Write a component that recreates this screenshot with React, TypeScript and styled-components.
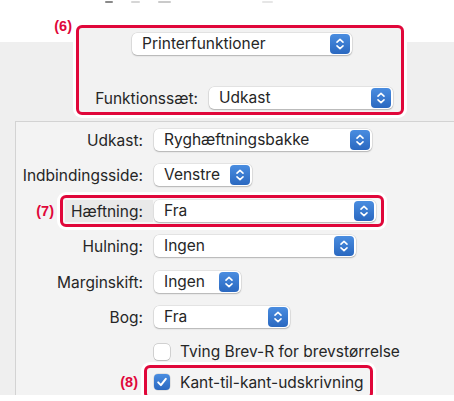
import React from "react";
import styled, { createGlobalStyle } from "styled-components";

const RED = "#e0073a";
const TEXT = "#262626";
const BLUE = "linear-gradient(to bottom, #4a8de0, #2a68c0)";

const GlobalStyle = createGlobalStyle`
  html, body {
    margin: 0;
    padding: 0;
    background: #fff;
  }

  body {
    font-family: Inter, "Liberation Sans", sans-serif;
    font-size: 15.5px;
    color: ${TEXT};
    -webkit-font-smoothing: antialiased;
  }
`;

const Window = styled.div`
  width: 454px;
  height: 395px;
  display: flex;
  flex-direction: column;
  background: linear-gradient(to bottom, #fff 0 42px, #efefef 42px);
`;

const Marks = styled.div`
  display: flex;
  height: 2px;
  margin-top: 1px;
`;

const Mark = styled.span<{ $ml: number; $w: number; $c: string }>`
  margin-left: ${(p) => p.$ml}px;
  width: ${(p) => p.$w}px;
  height: 2px;
  border-radius: 1px;
  background: ${(p) => p.$c};
  filter: blur(0.4px);
`;

const TopGroup = styled.div`
  display: flex;
  align-items: flex-start;
  margin-top: 15px;
`;

const Tag = styled.span<{ $width: number }>`
  width: ${(p) => p.$width}px;
  flex-shrink: 0;
  text-align: right;
  font-family: "Liberation Sans", Arial, sans-serif;
  font-weight: 700;
  font-size: 14.5px;
  line-height: 16px;
  color: ${RED};
`;

const Annot = styled.div<{ $bg: string }>`
  box-sizing: border-box;
  border: 3px solid ${RED};
  border-radius: 6px;
  box-shadow: 0 0 0 3px #fff;
  background: ${(p) => p.$bg};
`;

const FeatureBox = styled(Annot)`
  width: 328px;
  height: 90px;
  margin: 7px 0 0 4px;
  display: flex;
  flex-direction: column;
`;

const StapleBox = styled(Annot)`
  height: 32px;
  display: flex;
  align-items: stretch;
  padding: 2px 5px 2px 2px;
  margin-left: 6px;
`;

const EdgeBox = styled(Annot)`
  height: 34px;
  display: flex;
  align-items: center;
  padding: 0 6px 0 7px;
  margin-left: 6px;
`;

const PopupBox = styled.div<{ $w: number; $mt?: number; $ml?: number }>`
  width: ${(p) => p.$w}px;
  height: 22px;
  flex-shrink: 0;
  box-sizing: border-box;
  margin-top: ${(p) => p.$mt ?? 0}px;
  margin-left: ${(p) => p.$ml ?? 0}px;
  display: flex;
  align-items: center;
  justify-content: space-between;
  padding: 0 2px 0 10px;
  background: #fff;
  border-radius: 5px;
  box-shadow: 0 0 0 0.5px rgba(0, 0, 0, 0.12), 0 1px 1.5px rgba(0, 0, 0, 0.22);
  line-height: 22px;
  white-space: nowrap;
`;

const Stepper = styled.span`
  width: 20px;
  height: 20px;
  border-radius: 4px;
  background: ${BLUE};
  display: flex;
  align-items: center;
  justify-content: center;
`;

const FeatureRow = styled.div`
  display: flex;
  align-items: center;
  margin: 32px 0 0 11px;
`;

const FeatureLabel = styled.span`
  width: 108px;
  margin-right: 11px;
  text-align: right;
  white-space: nowrap;
`;

const Panel = styled.div`
  flex: 1;
  margin: 6px 0 0 15px;
  padding-top: 7px;
  display: flex;
  flex-direction: column;
  background: #f3f3f3;
  border-left: 1px solid #d3d3d3;
  border-top: 1px solid #d3d3d3;
`;

const Row = styled.div<{ $top: number }>`
  display: flex;
  align-items: center;
  margin-top: ${(p) => p.$top}px;
`;

const Label = styled.span`
  width: 127px;
  margin-right: 11px;
  flex-shrink: 0;
  text-align: right;
  white-space: nowrap;
`;

const LabelCell = styled.span`
  width: 88px;
  box-sizing: border-box;
  padding-right: 10px;
  margin-right: 1px;
  display: flex;
  align-items: center;
  justify-content: flex-end;
  background: #e9e9e9;
  white-space: nowrap;
`;

const Check = styled.span<{ $on?: boolean }>`
  width: 16px;
  height: 16px;
  flex-shrink: 0;
  border-radius: 4px;
  display: flex;
  align-items: center;
  justify-content: center;
  background: ${(p) => (p.$on ? BLUE : "#fff")};
  box-shadow: ${(p) =>
    p.$on
      ? "0 0 0 0.5px rgba(0,0,0,0.15)"
      : "0 0 0 0.5px rgba(0,0,0,0.28), 0 1px 1px rgba(0,0,0,0.1)"};
`;

const CheckText = styled.span`
  margin-left: 10px;
  white-space: nowrap;
`;

const Arrows = () => (
  <svg width="20" height="20" viewBox="0 0 20 20" fill="none">
    <path
      d="M7 8.2 L10 5.4 L13 8.2 M7 11.8 L10 14.6 L13 11.8"
      stroke="#fff"
      strokeWidth="1.6"
      strokeLinecap="round"
      strokeLinejoin="round"
    />
  </svg>
);

const Tick = () => (
  <svg width="16" height="16" viewBox="0 0 16 16" fill="none">
    <path
      d="M4.2 8.4 L6.9 11.1 L11.8 4.9"
      stroke="#fff"
      strokeWidth="2"
      strokeLinecap="round"
      strokeLinejoin="round"
    />
  </svg>
);

const Popup = ({
  w,
  mt,
  ml,
  children,
}: {
  w: number;
  mt?: number;
  ml?: number;
  children: React.ReactNode;
}) => (
  <PopupBox $w={w} $mt={mt} $ml={ml}>
    <span>{children}</span>
    <Stepper>
      <Arrows />
    </Stepper>
  </PopupBox>
);

const App = () => (
  <>
    <GlobalStyle />
    <Window>
      <Marks>
        <Mark $ml={105} $w={8} $c="#8a8a8a" />
        <Mark $ml={18} $w={9} $c="#d6d6d6" />
        <Mark $ml={18} $w={13} $c="#cacaca" />
        <Mark $ml={91} $w={11} $c="#e6e6e6" />
      </Marks>

      <TopGroup>
        <Tag $width={72}>(6)</Tag>
        <FeatureBox $bg="#f2f2f2">
          <Popup w={220} mt={5} ml={53}>
            Printerfunktioner
          </Popup>
          <FeatureRow>
            <FeatureLabel>Funktionssæt:</FeatureLabel>
            <Popup w={184}>Udkast</Popup>
          </FeatureRow>
        </FeatureBox>
      </TopGroup>

      <Panel>
        <Row $top={0}>
          <Label>Udkast:</Label>
          <Popup w={218}>Ryghæftningsbakke</Popup>
        </Row>
        <Row $top={13}>
          <Label>Indbindingsside:</Label>
          <Popup w={98}>Venstre</Popup>
        </Row>
        <Row $top={9}>
          <Tag $width={38}>(7)</Tag>
          <StapleBox $bg="#f6f6f6">
            <LabelCell>Hæftning:</LabelCell>
            <Popup w={222}>Fra</Popup>
          </StapleBox>
        </Row>
        <Row $top={8}>
          <Label>Hulning:</Label>
          <Popup w={202}>Ingen</Popup>
        </Row>
        <Row $top={14}>
          <Label>Marginskift:</Label>
          <Popup w={87}>Ingen</Popup>
        </Row>
        <Row $top={13}>
          <Label>Bog:</Label>
          <Popup w={136}>Fra</Popup>
        </Row>
        <Row $top={14}>
          <Label />
          <Check />
          <CheckText>Tving Brev-R for brevstørrelse</CheckText>
        </Row>
        <Row $top={4}>
          <Tag $width={122}>(8)</Tag>
          <EdgeBox $bg="#f4f4f4">
            <Check $on>
              <Tick />
            </Check>
            <CheckText>Kant-til-kant-udskrivning</CheckText>
          </EdgeBox>
        </Row>
      </Panel>
    </Window>
  </>
);

export default App;
